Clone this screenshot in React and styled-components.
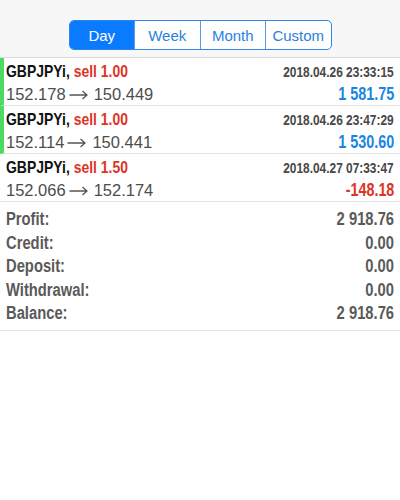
import React from 'react';
import styled, { createGlobalStyle } from 'styled-components';

const GlobalStyle = createGlobalStyle`
  html, body {
    margin: 0;
    padding: 0;
    background: #ffffff;
  }
  body {
    font-family: "Liberation Sans", Arial, sans-serif;
  }
`;

const PERIODS = ['Day', 'Week', 'Month', 'Custom'];

const TRADES = [
  { symbol: 'GBPJPYi', volume: '1.00', open: '152.178', close: '150.449', time: '2018.04.26 23:33:15', profit: '1 581.75', active: true },
  { symbol: 'GBPJPYi', volume: '1.00', open: '152.114', close: '150.441', time: '2018.04.26 23:47:29', profit: '1 530.60', active: true },
  { symbol: 'GBPJPYi', volume: '1.50', open: '152.066', close: '152.174', time: '2018.04.27 07:33:47', profit: '-148.18', active: false },
];

const SUMMARY = [
  { label: 'Profit:', value: '2 918.76' },
  { label: 'Credit:', value: '0.00' },
  { label: 'Deposit:', value: '0.00' },
  { label: 'Withdrawal:', value: '0.00' },
  { label: 'Balance:', value: '2 918.76' },
];

// no narrow face installed, so bold labels get squeezed horizontally
const narrow = (origin) => `
  font-family: "Liberation Sans", Arial, sans-serif;
  font-weight: bold;
  white-space: nowrap;
  transform: scaleX(0.82);
  transform-origin: ${origin} center;
`;

const Page = styled.div`
  width: 400px;
  height: 500px;
  background: #ffffff;
`;

const Toolbar = styled.div`
  height: 58px;
  background: #f7f7f7;
  border-bottom: 1px solid #dcdcdc;
  display: flex;
  align-items: flex-start;
  justify-content: center;
  box-sizing: border-box;
  padding-top: 20px;
`;

const Segmented = styled.div`
  display: flex;
  width: 263px;
  height: 30px;
  border: 1px solid #2f86ea;
  border-radius: 5px;
  overflow: hidden;
  box-sizing: border-box;
  background: #ffffff;
`;

const Segment = styled.div`
  flex: 1;
  display: flex;
  align-items: center;
  justify-content: center;
  font-family: "Liberation Sans", Arial, sans-serif;
  font-size: 15px;
  color: ${({ selected }) => (selected ? '#ffffff' : '#2d7fdc')};
  background: ${({ selected }) => (selected ? '#0a7bff' : 'transparent')};
  & + & {
    border-left: 1px solid #5a9be6;
  }
`;

const Row = styled.div`
  display: flex;
  justify-content: space-between;
  height: 48px;
  box-sizing: border-box;
  padding: 3px 6px 1px ${({ active }) => (active ? '2px' : '6px')};
  border-left: ${({ active }) => (active ? '4px solid #4cd964' : 'none')};
  border-bottom: 1px solid #e2e2e2;
`;

const Column = styled.div`
  display: flex;
  flex-direction: column;
  align-items: ${({ right }) => (right ? 'flex-end' : 'flex-start')};
`;

const Title = styled.div`
  ${narrow('left')}
  font-size: 17px;
  line-height: 22px;
  color: #111111;
`;

const Sell = styled.span`
  color: #dd3426;
`;

const Prices = styled.div`
  display: flex;
  align-items: center;
  font-family: "Liberation Sans", Arial, sans-serif;
  font-size: 16.5px;
  line-height: 22px;
  color: #4d4d4d;
  white-space: nowrap;
`;

const ArrowIcon = styled.svg`
  width: 19px;
  height: 10px;
  margin: 1px 6px 0 3px;
  flex: none;
`;

const Arrow = () => (
  <ArrowIcon viewBox="0 0 19 10">
    <path d="M0.5 5H18M13.5 1L18 5L13.5 9" fill="none" stroke="#555555" strokeWidth="1.3" />
  </ArrowIcon>
);

const Time = styled.div`
  ${narrow('right')}
  font-size: 14.5px;
  line-height: 22px;
  color: #474747;
`;

const Amount = styled.div`
  ${narrow('right')}
  font-size: 17.5px;
  line-height: 23px;
  color: ${({ negative }) => (negative ? '#dd3426' : '#1a86e4')};
`;

const Summary = styled.div`
  padding: 6px 6px 4px;
  border-bottom: 1px solid #e2e2e2;
`;

const SummaryRow = styled.div`
  display: flex;
  justify-content: space-between;
  height: 23.5px;
  align-items: center;
`;

const SummaryText = styled.span`
  ${({ right }) => narrow(right ? 'right' : 'left')}
  font-size: 18px;
  color: #5a5a5a;
`;

export default function App() {
  return (
    <Page>
      <GlobalStyle />
      <Toolbar>
        <Segmented>
          {PERIODS.map((p) => (
            <Segment key={p} selected={p === 'Day'}>{p}</Segment>
          ))}
        </Segmented>
      </Toolbar>
      {TRADES.map((t, i) => (
        <Row key={i} active={t.active}>
          <Column>
            <Title>
              {t.symbol}, <Sell>sell {t.volume}</Sell>
            </Title>
            <Prices>
              {t.open}<Arrow />{t.close}
            </Prices>
          </Column>
          <Column right>
            <Time>{t.time}</Time>
            <Amount negative={t.profit.startsWith('-')}>{t.profit}</Amount>
          </Column>
        </Row>
      ))}
      <Summary>
        {SUMMARY.map((s) => (
          <SummaryRow key={s.label}>
            <SummaryText>{s.label}</SummaryText>
            <SummaryText right>{s.value}</SummaryText>
          </SummaryRow>
        ))}
      </Summary>
    </Page>
  );
}
